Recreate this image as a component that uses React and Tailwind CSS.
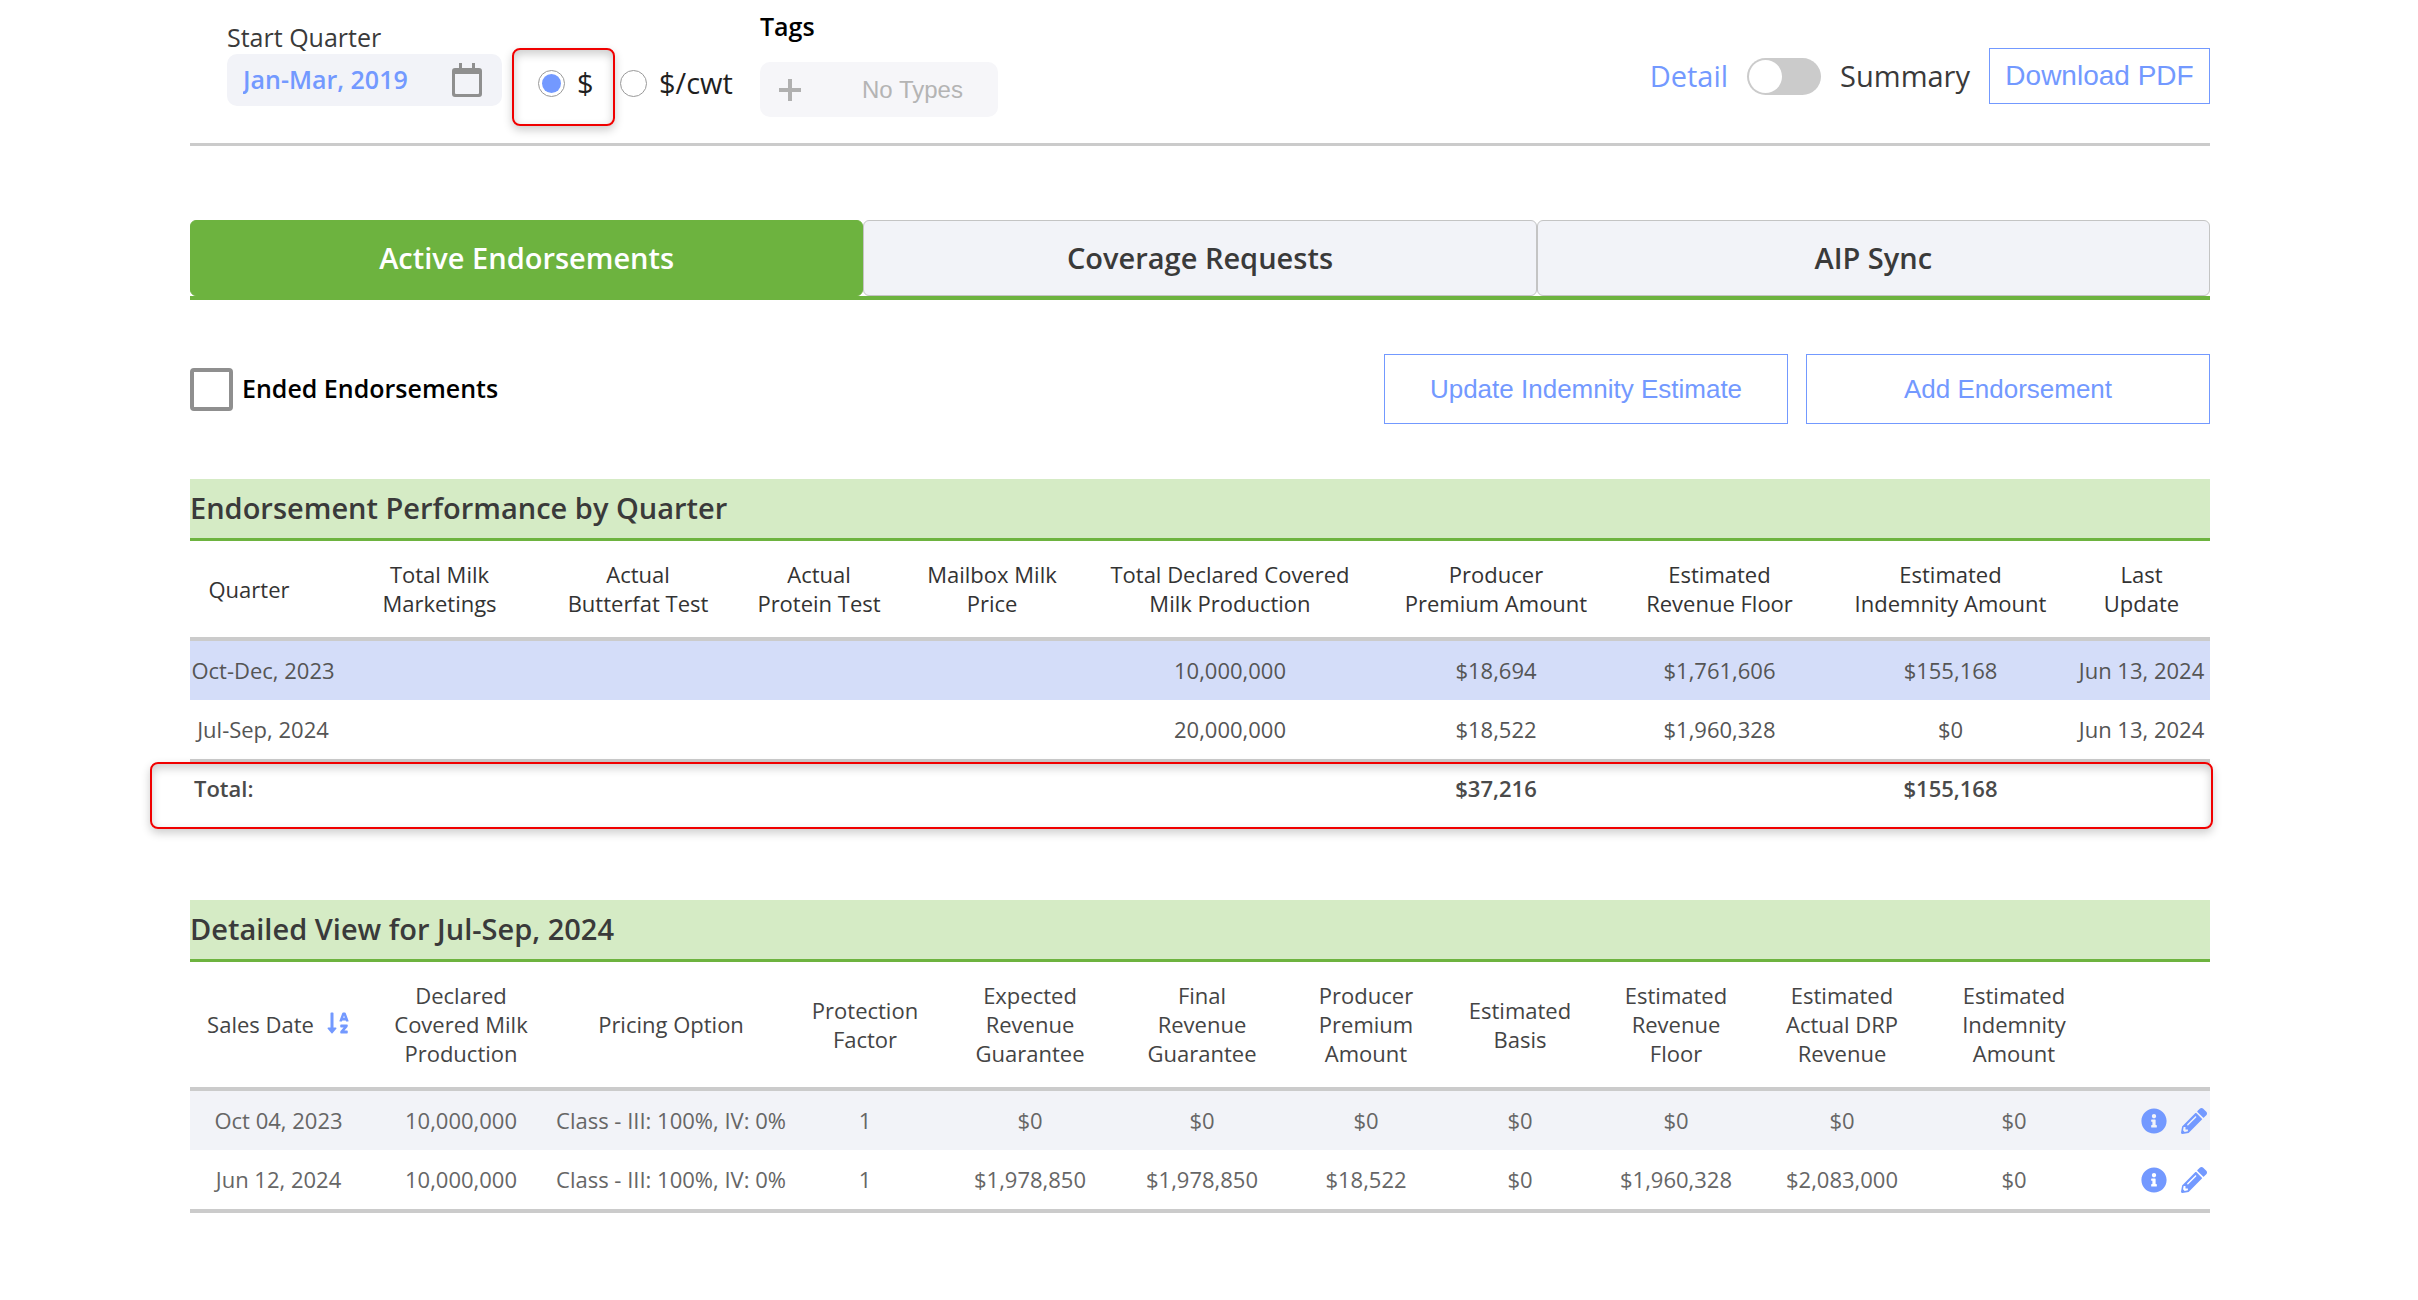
import { useState } from "react";
import { FaInfoCircle, FaPencilAlt, FaSortAlphaDown } from "react-icons/fa";

const tabs = ["Active Endorsements", "Coverage Requests", "AIP Sync"];

const quarterColumns = [
  { lines: ["Quarter"], width: "w-[146px]", className: "pr-7" },
  { lines: ["Total Milk", "Marketings"], width: "w-[207px]" },
  { lines: ["Actual", "Butterfat Test"], width: "w-[190px]" },
  { lines: ["Actual", "Protein Test"], width: "w-[172px]" },
  { lines: ["Mailbox Milk", "Price"], width: "w-[174px]" },
  { lines: ["Total Declared Covered", "Milk Production"], width: "w-[302px]" },
  { lines: ["Producer", "Premium Amount"], width: "w-[230px]" },
  { lines: ["Estimated", "Revenue Floor"], width: "w-[217px]" },
  { lines: ["Estimated", "Indemnity Amount"], width: "w-[245px]" },
  { lines: ["Last", "Update"], width: "w-[137px]" },
];

const quarterRows = [
  ["Oct-Dec, 2023", "", "", "", "", "10,000,000", "$18,694", "$1,761,606", "$155,168", "Jun 13, 2024"],
  ["Jul-Sep, 2024", "", "", "", "", "20,000,000", "$18,522", "$1,960,328", "$0", "Jun 13, 2024"],
];

const detailColumns = [
  { lines: ["Sales Date"], width: "w-[177px]", sortable: true },
  { lines: ["Declared", "Covered Milk", "Production"], width: "w-[188px]" },
  { lines: ["Pricing Option"], width: "w-[232px]" },
  { lines: ["Protection", "Factor"], width: "w-[156px]" },
  { lines: ["Expected", "Revenue", "Guarantee"], width: "w-[174px]" },
  { lines: ["Final", "Revenue", "Guarantee"], width: "w-[170px]" },
  { lines: ["Producer", "Premium", "Amount"], width: "w-[158px]" },
  { lines: ["Estimated", "Basis"], width: "w-[150px]" },
  { lines: ["Estimated", "Revenue", "Floor"], width: "w-[162px]" },
  { lines: ["Estimated", "Actual DRP", "Revenue"], width: "w-[170px]" },
  { lines: ["Estimated", "Indemnity", "Amount"], width: "w-[174px]" },
];

const detailRows = [
  ["Oct 04, 2023", "10,000,000", "Class - III: 100%, IV: 0%", "1", "$0", "$0", "$0", "$0", "$0", "$0", "$0"],
  ["Jun 12, 2024", "10,000,000", "Class - III: 100%, IV: 0%", "1", "$1,978,850", "$1,978,850", "$18,522", "$0", "$1,960,328", "$2,083,000", "$0"],
];

function CalendarIcon() {
  return (
    <svg viewBox="0 0 30 34" className="h-[34px] w-[30px]" fill="#8f8f8f" aria-hidden="true">
      <path fillRule="evenodd" d="M7 0h3v5h10V0h3v5h4a3 3 0 0 1 3 3v23a3 3 0 0 1-3 3H3a3 3 0 0 1-3-3V8a3 3 0 0 1 3-3h4zM3 11v19a1 1 0 0 0 1 1h22a1 1 0 0 0 1-1V11z" />
    </svg>
  );
}

function SectionTitle({ children }) {
  return (
    <h2 className="h-[62px] border-b-3 border-[#6db33f] bg-[#d5ebc5] text-[29px] leading-[58px] font-semibold text-[#3a3a3a]">
      {children}
    </h2>
  );
}

function Columns({ columns }) {
  return columns.map((column) => (
    <th key={column.lines.join(" ")} scope="col" className="p-0 font-normal">
      <div className={`flex items-center justify-center gap-3 ${column.className || ""}`}>
        <span>
          {column.lines.map((line) => (
            <span key={line} className="block whitespace-nowrap">{line}</span>
          ))}
        </span>
        {column.sortable && (
          <button type="button" aria-label="Sort" className="pb-1 text-[#7399ff]">
            <FaSortAlphaDown className="size-6" />
          </button>
        )}
      </div>
    </th>
  ));
}

function App() {
  const [activeTab, setActiveTab] = useState(tabs[0]);
  const [unit, setUnit] = useState("dollar");
  const [summary, setSummary] = useState(false);

  return (
    <main className="bg-white pr-[208px] pb-20 pl-[190px] font-['Open_Sans',sans-serif] text-[#3a3a3a]">
      {/* Filters */}
      <header className="flex items-start justify-between border-b-3 border-[#cbcbcb] pb-[17px] pl-[37px]">
        <div className="flex items-start">
          <div className="mt-5 w-[275px]">
            <label htmlFor="quarter" className="block text-[25px] leading-[34px]">Start Quarter</label>
            <div className="flex h-[52px] items-center justify-between rounded-[10px] bg-[#f2f3f8] pr-5 pl-4">
              <input
                id="quarter"
                defaultValue="Jan-Mar, 2019"
                className="w-[190px] bg-transparent text-[25px] font-semibold text-[#7399ff] outline-none"
              />
              <CalendarIcon />
            </div>
          </div>

          <div className="mt-12 ml-[10px] flex text-[29px] text-[#1f1f1f]">
            <label className="flex h-[78px] w-[103px] items-center gap-3 rounded-lg border-2 border-[#f00000] pb-2 pl-6 shadow-[0_4px_10px_rgba(0,0,0,0.2),inset_0_4px_10px_rgba(0,0,0,0.2)]">
              <input
                type="radio"
                name="unit"
                checked={unit === "dollar"}
                onChange={() => setUnit("dollar")}
                className="size-[27px] appearance-none rounded-full border border-[#999] bg-white bg-clip-content p-[3px] checked:bg-[#7399ff]"
              />
              $
            </label>
            <label className="ml-[5px] flex h-[78px] items-center gap-3 pb-2">
              <input
                type="radio"
                name="unit"
                checked={unit === "cwt"}
                onChange={() => setUnit("cwt")}
                className="size-[27px] appearance-none rounded-full border border-[#999] bg-white bg-clip-content p-[3px] checked:bg-[#7399ff]"
              />
              $/cwt
            </label>
          </div>

          <div className="mt-2 ml-[27px] w-[238px]">
            <div className="text-[25px] leading-9 font-semibold text-black">Tags</div>
            <button
              type="button"
              className="mt-[18px] flex h-[55px] w-full items-center rounded-[10px] bg-[#f6f6f9] pr-[35px] pl-[19px] font-['Liberation_Sans',sans-serif] text-[24px] text-[#b4b4b4]"
            >
              <svg viewBox="0 0 22 22" className="size-[22px]" fill="#b0b0b0" aria-hidden="true">
                <path d="M9 0h4v9h9v4h-9v9H9v-9H0V9h9z" />
              </svg>
              <span className="ml-auto">No Types</span>
            </button>
          </div>
        </div>

        <div className="mt-12 flex items-center text-[29px]">
          <span className="text-[#7399ff]">Detail</span>
          <button
            type="button"
            role="switch"
            aria-checked={summary}
            aria-label="Summary view"
            onClick={() => setSummary(!summary)}
            className={`mx-[19px] flex h-[37px] w-[74px] items-center rounded-full bg-[#cbcbcb] p-[2px] ${summary ? "justify-end" : "justify-start"}`}
          >
            <span className="size-[33px] rounded-full bg-white" />
          </button>
          <span>Summary</span>
          <button
            type="button"
            className="ml-[19px] h-[56px] w-[221px] border border-[#7399ff] font-['Liberation_Sans',sans-serif] text-[28px] text-[#7399ff]"
          >
            Download PDF
          </button>
        </div>
      </header>

      {/* Tabs */}
      <nav className="mt-[74px] flex border-b-4 border-[#6db33f]">
        {tabs.map((tab) => (
          <button
            key={tab}
            type="button"
            onClick={() => setActiveTab(tab)}
            className={`h-[76px] flex-1 rounded-md border text-[29px] font-semibold ${activeTab === tab
              ? "border-[#6db33f] bg-[#6db33f] text-white"
              : "border-[#c4c4c4] bg-[#f2f3f8] text-[#3a3a3a]"}`}
          >
            {tab}
          </button>
        ))}
      </nav>

      <div className="mt-[54px] flex h-[70px] items-center justify-between">
        <label className="flex items-center gap-[9px] text-[25px] font-semibold text-black">
          <input type="checkbox" className="size-[43px] appearance-none rounded-sm border-4 border-[#8f8f8f] bg-white checked:bg-[#7399ff]" />
          Ended Endorsements
        </label>
        <div className="flex h-full gap-[18px] font-['Liberation_Sans',sans-serif] text-[26px] text-[#7399ff]">
          <button type="button" className="w-[404px] border border-[#7399ff]">Update Indemnity Estimate</button>
          <button type="button" className="w-[404px] border border-[#7399ff]">Add Endorsement</button>
        </div>
      </div>

      {/* Performance by quarter */}
      <section className="relative mt-[55px]">
        <SectionTitle>Endorsement Performance by Quarter</SectionTitle>
        <table className="w-full table-fixed border-collapse text-center text-[22px] leading-[29px] text-[#555]">
          <colgroup>
            {quarterColumns.map((column, i) => <col key={i} className={column.width} />)}
          </colgroup>
          <thead className="text-[#333]">
            <tr className="h-[98px] border-b-4 border-[#cbcbcb]">
              <Columns columns={quarterColumns} />
            </tr>
          </thead>
          <tbody>
            {quarterRows.map((row) => (
              <tr key={row[0]} className="h-[61px] odd:bg-[#d4ddf9]">
                {row.map((cell, i) => <td key={i} className="p-0 whitespace-nowrap">{cell}</td>)}
              </tr>
            ))}
          </tbody>
          <tfoot className="font-semibold text-[#4a4a4a]">
            <tr className="h-[53px] border-t-4 border-[#cbcbcb]">
              <td className="p-0 pl-1 text-left">Total:</td>
              <td colSpan={5} />
              <td className="p-0">$37,216</td>
              <td />
              <td className="p-0">$155,168</td>
              <td />
            </tr>
          </tfoot>
        </table>
        <div className="pointer-events-none absolute -right-[3px] -bottom-[15px] -left-10 h-[67px] rounded-lg border-2 border-[#f00000] shadow-[0_4px_10px_rgba(0,0,0,0.2),inset_0_4px_10px_rgba(0,0,0,0.2)]" />
      </section>

      {/* Detailed view */}
      <section className="mt-[86px]">
        <SectionTitle>Detailed View for Jul-Sep, 2024</SectionTitle>
        <table className="w-full table-fixed border-collapse text-center text-[22px] leading-[29px] text-[#666]">
          <colgroup>
            {detailColumns.map((column, i) => <col key={i} className={column.width} />)}
            <col className="w-[109px]" />
          </colgroup>
          <thead className="text-[#444]">
            <tr className="h-[127px] border-b-4 border-[#cbcbcb]">
              <Columns columns={detailColumns} />
              <td />
            </tr>
          </thead>
          <tbody className="border-b-4 border-[#cbcbcb]">
            {detailRows.map((row) => (
              <tr key={row[0]} className="h-[61px] odd:bg-[#f2f3f8]">
                {row.map((cell, i) => <td key={i} className="p-0 whitespace-nowrap">{cell}</td>)}
                <td className="p-0">
                  <div className="flex items-center justify-end gap-[14px] pr-[3px] text-[#7399ff]">
                    <button type="button" aria-label="Details"><FaInfoCircle className="size-[26px]" /></button>
                    <button type="button" aria-label="Edit"><FaPencilAlt className="size-[26px]" /></button>
                  </div>
                </td>
              </tr>
            ))}
          </tbody>
        </table>
      </section>
    </main>
  );
}

export default App;
